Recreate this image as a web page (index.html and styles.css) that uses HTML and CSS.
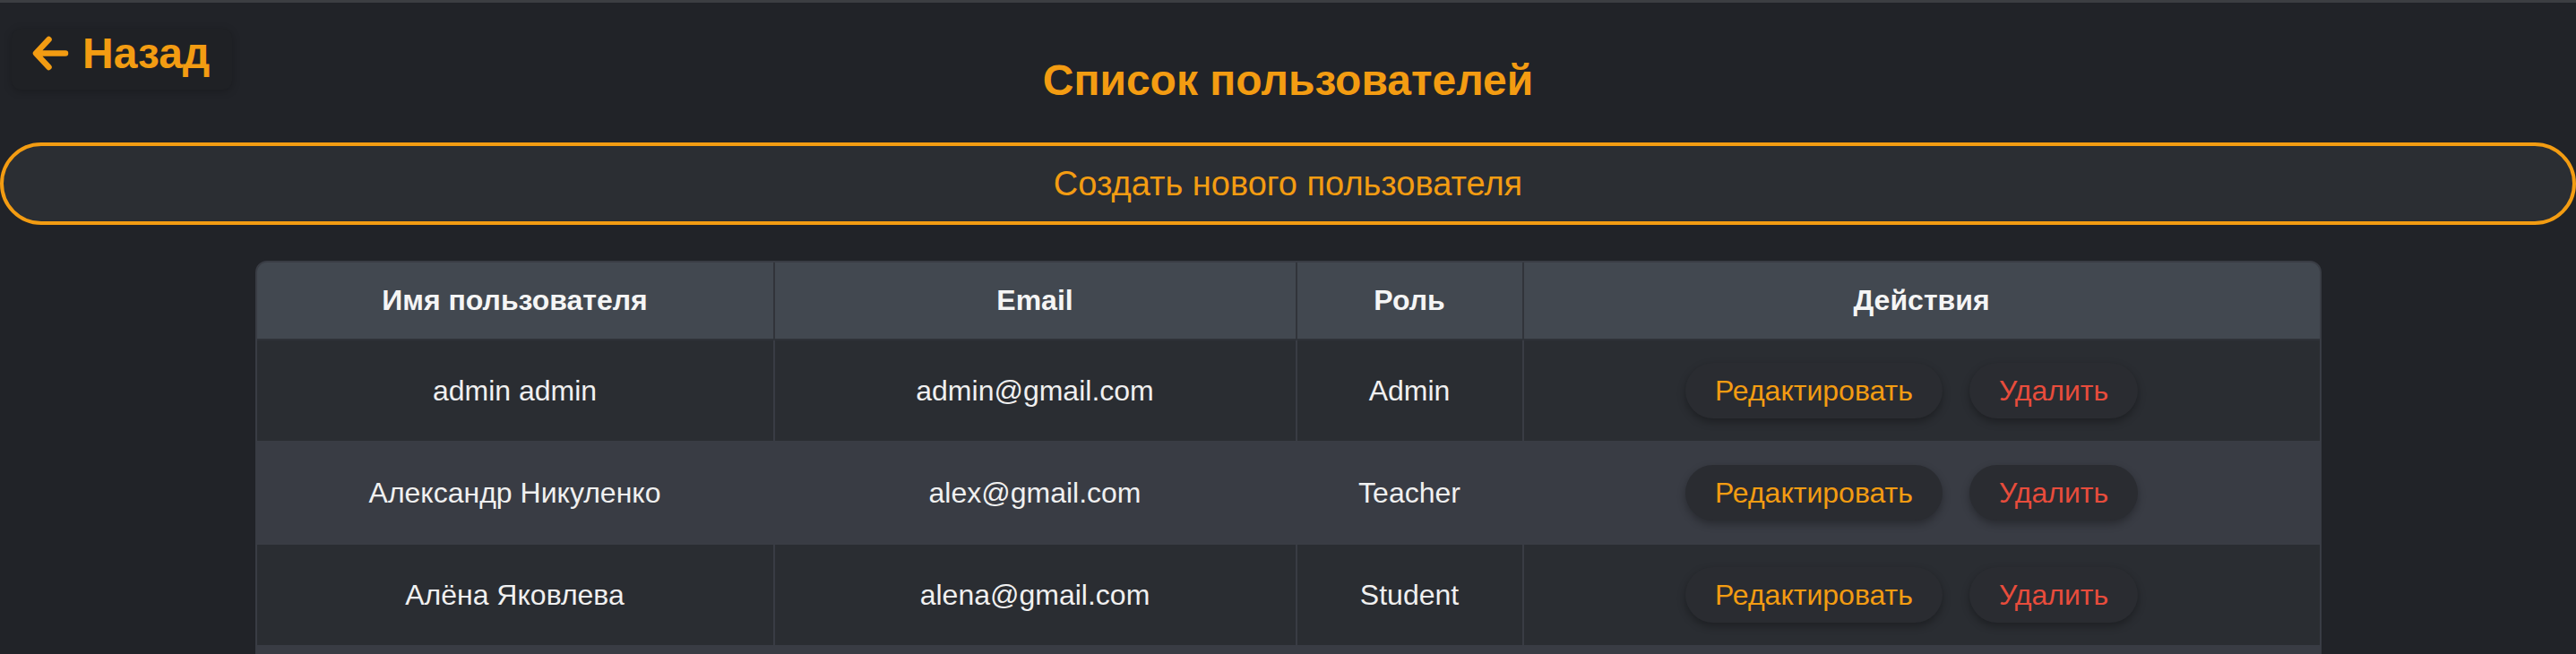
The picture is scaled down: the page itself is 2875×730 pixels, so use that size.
FILE: index.html
```html
<!DOCTYPE html>
<html lang="ru">
<head>
<meta charset="utf-8">
<title>Список пользователей</title>
<link rel="stylesheet" href="styles.css">
</head>
<body>
<div class="topbar"></div>
<header class="page-head">
  <button class="back-btn" type="button">
    <svg class="back-icon" viewBox="0 0 42 41" width="42" height="41" aria-hidden="true">
      <path d="M38 20.5H6M19.5 5L5 20.5L19.5 36" fill="none" stroke="#f39c12" stroke-width="6.5" stroke-linecap="round" stroke-linejoin="round"/>
    </svg>
    <span>Назад</span>
  </button>
  <h1 class="title">Список пользователей</h1>
  <div></div>
</header>
<button class="create-btn" type="button">Создать нового пользователя</button>
<table class="users">
  <colgroup>
    <col class="c-name">
    <col class="c-email">
    <col class="c-role">
    <col class="c-actions">
  </colgroup>
  <thead>
    <tr>
      <th>Имя пользователя</th>
      <th>Email</th>
      <th>Роль</th>
      <th>Действия</th>
    </tr>
  </thead>
  <tbody>
    <tr class="odd">
      <td>admin admin</td>
      <td>admin@gmail.com</td>
      <td>Admin</td>
      <td><div class="actions"><button class="act edit" type="button">Редактировать</button><button class="act del" type="button">Удалить</button></div></td>
    </tr>
    <tr class="even">
      <td>Александр Никуленко</td>
      <td>alex@gmail.com</td>
      <td>Teacher</td>
      <td><div class="actions"><button class="act edit" type="button">Редактировать</button><button class="act del" type="button">Удалить</button></div></td>
    </tr>
    <tr class="odd">
      <td>Алёна Яковлева</td>
      <td>alena@gmail.com</td>
      <td>Student</td>
      <td><div class="actions"><button class="act edit" type="button">Редактировать</button><button class="act del" type="button">Удалить</button></div></td>
    </tr>
    <tr class="even spacer">
      <td>&nbsp;</td>
      <td>&nbsp;</td>
      <td>&nbsp;</td>
      <td>&nbsp;</td>
    </tr>
  </tbody>
</table>
</body>
</html>
```
FILE: styles.css
```css
html, body {
  margin: 0;
  padding: 0;
}
body {
  background: #212328;
  font-family: "Liberation Sans", Arial, sans-serif;
  color: #f0f0f0;
}
.topbar {
  height: 3px;
  background: #3c3e42;
}
.page-head {
  display: grid;
  grid-template-columns: 1fr auto 1fr;
  align-items: start;
}
.back-btn {
  justify-self: start;
  margin: 29px 0 0 13px;
  height: 68px;
  box-sizing: border-box;
  display: flex;
  align-items: flex-start;
  gap: 15px;
  padding: 0 25px 0 22px;
  border: none;
  border-radius: 10px;
  background: #1f2125;
  box-shadow: 0 2px 10px rgba(0, 0, 0, 0.22);
  color: #f39c12;
  font-family: "Liberation Sans", Arial, sans-serif;
  font-weight: bold;
  font-size: 48px;
  line-height: 55px;
  cursor: pointer;
}
.back-icon {
  display: block;
  margin-top: 7px;
  flex: none;
}
.title {
  margin: 59px 0 0;
  font-size: 48px;
  font-weight: bold;
  line-height: 55px;
  color: #f39c12;
  text-align: center;
}
.create-btn {
  display: block;
  box-sizing: border-box;
  width: 100%;
  height: 92px;
  margin: 42px 0 0;
  border: 4px solid #f39c12;
  border-radius: 46px;
  background: #2b2e33;
  color: #f39c12;
  font-family: "Liberation Sans", Arial, sans-serif;
  font-size: 38px;
  cursor: pointer;
}
.users {
  width: 2306px;
  margin: 40px auto 0;
  table-layout: fixed;
  border-collapse: separate;
  border-spacing: 0;
  border: 2px solid #393c44;
  border-radius: 13px;
  background: #393c44;
}
.c-name { width: 578px; }
.c-email { width: 583px; }
.c-role { width: 253px; }
.c-actions { width: 888px; }
.users th,
.users td {
  text-align: center;
  vertical-align: middle;
  font-size: 32px;
  line-height: 37px;
}
.users th {
  padding: 24px;
  background: #424850;
  color: #f5f5f5;
  font-weight: bold;
  border-right: 2px solid #31343a;
  border-bottom: 2px solid #2f3238;
}
.users th:first-child { border-top-left-radius: 11px; }
.users th:last-child { border-top-right-radius: 11px; border-right: none; }
.users td {
  padding: 25px 24px;
  color: #f0f0f0;
  border-right: 2px solid #393c44;
  border-bottom: 2px solid #393c44;
}
.users td:last-child { border-right: none; }
.users tr.odd td { background: #2a2d32; }
.users tr.even td { background: #393c44; }
.actions {
  display: flex;
  justify-content: center;
  gap: 30px;
  padding-right: 22px;
}
.act {
  height: 62px;
  padding: 0 33px;
  border: none;
  border-radius: 31px;
  background: #2a2c31;
  box-shadow: 0 4px 10px rgba(0, 0, 0, 0.3);
  font-family: "Liberation Sans", Arial, sans-serif;
  font-size: 32px;
  cursor: pointer;
}
.act.edit { color: #f39c12; }
.act.del { color: #e74c3c; }
.spacer td { height: 62px; }
```
